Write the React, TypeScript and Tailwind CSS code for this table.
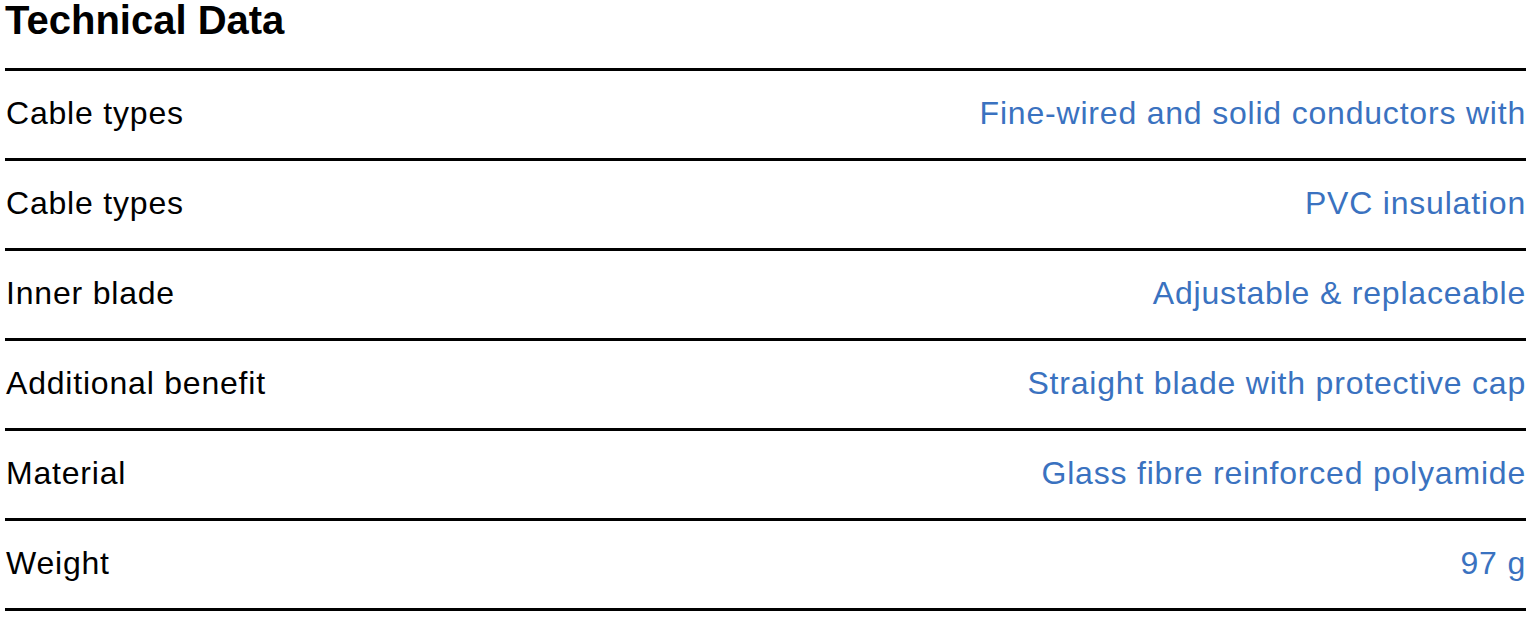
import React from 'react';

const rows: { label: string; value: string }[] = [
  { label: 'Cable types', value: 'Fine-wired and solid conductors with' },
  { label: 'Cable types', value: 'PVC insulation' },
  { label: 'Inner blade', value: 'Adjustable & replaceable' },
  { label: 'Additional benefit', value: 'Straight blade with protective cap' },
  { label: 'Material', value: 'Glass fibre reinforced polyamide' },
  { label: 'Weight', value: '97 g' },
];

export default function App() {
  return (
    <div className="w-[1532px] h-[620px] bg-white pl-[5px] pr-[6px] font-['Liberation_Sans',Arial,sans-serif]">
      <h2 className="h-[68px] text-[40px] leading-[40px] font-bold text-black">
        Technical Data
      </h2>
      <div className="border-b-[3px] border-black">
        {rows.map((row, i) => (
          <div
            key={i}
            className="flex h-[90px] items-center justify-between border-t-[3px] border-black pb-[4px] text-[32px] leading-[36px] tracking-[0.8px]"
          >
            <span className="pl-px text-black">{row.label}</span>
            <span className="text-[#3a72c0]">{row.value}</span>
          </div>
        ))}
      </div>
    </div>
  );
}
